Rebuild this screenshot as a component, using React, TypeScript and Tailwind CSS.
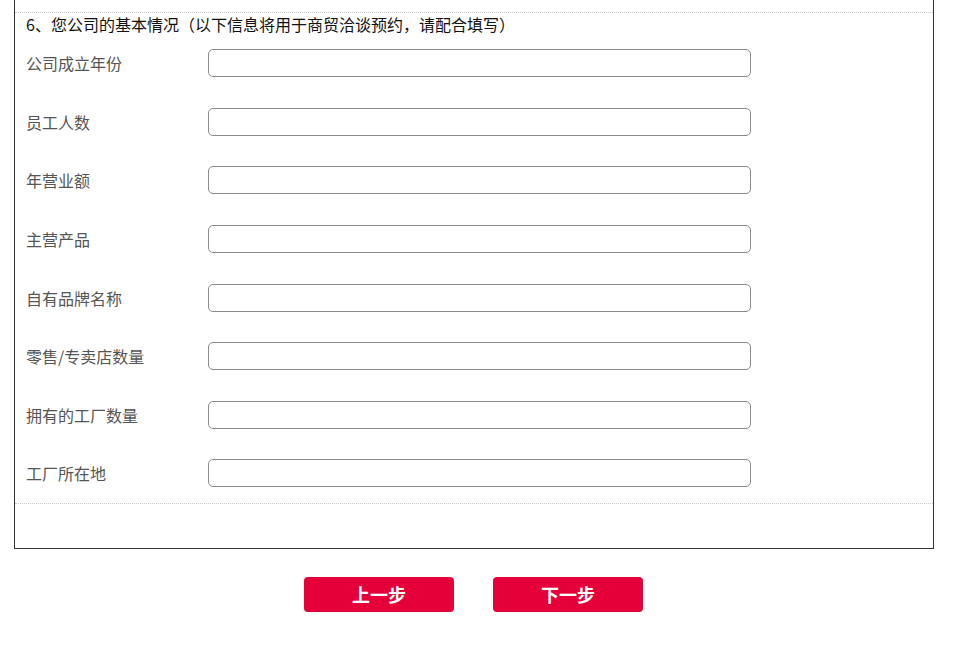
import React from "react";

const labels = [
  "公司成立年份",
  "员工人数",
  "年营业额",
  "主营产品",
  "自有品牌名称",
  "零售/专卖店数量",
  "拥有的工厂数量",
  "工厂所在地",
];

export default function App() {
  return (
    <div
      className="min-h-[651px] bg-white"
      style={{ fontFamily: '"Microsoft YaHei", "Noto Sans CJK SC", sans-serif' }}
    >
      <div className="ml-[14px] w-[920px] border-x border-b border-[#333] pt-[12px] pb-[44px]">
        <div className="border-t border-dotted border-[#c8c8c8]" />
        <div className="h-[21px] pl-[11px] pt-[1px] text-[16px] leading-[20px] text-[#111]">
          6、您公司的基本情况（以下信息将用于商贸洽谈预约，请配合填写）
        </div>
        <div className="flex flex-col">
          {labels.map((l) => (
            <div key={l} className="flex h-[58.6px] items-center pl-[11px]">
              <div className="w-[182px] text-[16px] leading-[20px] text-[#555]">{l}</div>
              <input
                type="text"
                className="h-[28px] w-[543px] rounded-[5px] border border-[#8a8a8a] bg-white outline-none"
              />
            </div>
          ))}
        </div>
        <div className="border-t border-dotted border-[#c8c8c8]" />
      </div>
      <div className="ml-[14px] flex w-[920px] gap-[39px] pl-[290px] pt-[28px]">
        <button className="h-[35px] w-[150px] rounded-[4px] bg-[#e6003a] text-[18px] font-bold text-white">
          上一步
        </button>
        <button className="h-[35px] w-[150px] rounded-[4px] bg-[#e6003a] text-[18px] font-bold text-white">
          下一步
        </button>
      </div>
    </div>
  );
}
